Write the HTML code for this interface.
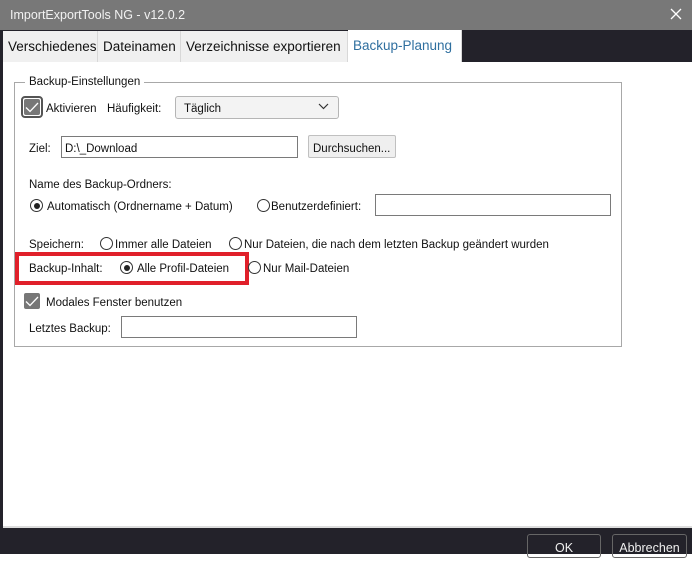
<!DOCTYPE html>
<html><head><meta charset="utf-8"><style>
*{box-sizing:border-box;margin:0;padding:0}
body{width:692px;height:554px;overflow:hidden;background:#fff;font-family:"Liberation Sans",sans-serif;font-size:11.5px;color:#111;position:relative}
.a{position:absolute;white-space:nowrap}
.t{position:absolute;white-space:nowrap;margin-top:2px}
.rad{position:absolute;width:13px;height:13px;border:1px solid #333;border-radius:50%;background:#fff}
.rad.on::after{content:"";position:absolute;left:2.5px;top:2.5px;width:6px;height:6px;border-radius:50%;background:#222}
.inp{position:absolute;border:1px solid #7a7a7a;background:#fff;height:22px}
.tab{position:absolute;top:31px;height:31px;background:#f0f0f0;border-right:1px solid #d8d8d8;font-size:13.5px;line-height:31px;padding-left:5px;color:#111}
</style></head><body>
<div class="a" style="left:0;top:0;width:692px;height:30px;background:#787878"></div>
<div class="a" style="left:10px;top:8px;color:#f2f2f2;font-size:12.5px">ImportExportTools NG - v12.0.2</div>
<svg class="a" style="left:670px;top:8px" width="12" height="12"><path d="M1 1L11 11M11 1L1 11" stroke="#fff" stroke-width="1.3"/></svg>
<div class="a" style="left:0;top:30px;width:692px;height:32px;background:#23222a"></div>
<div class="a" style="left:0;top:30px;width:3px;height:524px;background:#23222a"></div>
<div class="tab" style="left:3px;width:95px">Verschiedenes</div>
<div class="tab" style="left:98px;width:83px">Dateinamen</div>
<div class="tab" style="left:181px;width:167px">Verzeichnisse exportieren</div>
<div class="tab" style="left:348px;width:114px;background:#fff;color:#2f6f9f;top:30px;height:32px">Backup-Planung</div>
<div class="a" style="left:3px;top:62px;width:687px;height:466px;background:#fff"></div>
<div class="a" style="left:3px;top:526px;width:689px;height:2px;background:#ddd"></div>
<div class="a" style="left:0;top:528px;width:692px;height:26px;background:#23222a"></div>
<div class="a" style="left:527px;top:534px;width:74px;height:24px;border:1px solid #666;border-radius:3px;color:#eee;font-size:12.5px;text-align:center;line-height:26px">OK</div>
<div class="a" style="left:612px;top:534px;width:75px;height:24px;border:1px solid #666;border-radius:3px;color:#eee;font-size:12.5px;text-align:center;line-height:26px">Abbrechen</div>
<div class="a" style="left:14px;top:82px;width:608px;height:265px;border:1px solid #a8a8a8"></div>
<div class="t" style="left:25px;top:74px;background:#fff;padding:0 4px">Backup-Einstellungen</div>
<div class="a" style="left:21px;top:96px;width:22px;height:22px;border:2px solid #555;border-radius:4px;background:#fff"></div>
<div class="a" style="left:24px;top:99px;width:16px;height:16px;background:#777;border-radius:2px"></div>
<svg class="a" style="left:25px;top:102px" width="14" height="11"><path d="M1 5.5L5 9.5L13 1" stroke="#fff" stroke-width="1.3" fill="none"/></svg>
<div class="t" style="left:46px;top:101px">Aktivieren</div>
<div class="t" style="left:107px;top:101px">Häufigkeit:</div>
<div class="a" style="left:175px;top:96px;width:164px;height:23px;border:1px solid #b5b5b5;border-radius:3px;background:#f3f3f3"></div>
<div class="t" style="left:184px;top:101px">Täglich</div>
<svg class="a" style="left:318px;top:103px" width="11" height="7"><path d="M1 1L5.5 5.5L10 1" stroke="#333" stroke-width="1.2" fill="none"/></svg>
<div class="t" style="left:29px;top:141px">Ziel:</div>
<div class="inp" style="left:61px;top:136px;width:237px"></div>
<div class="t" style="left:65px;top:141px">D:\_Download</div>
<div class="a" style="left:308px;top:135px;width:88px;height:23px;border:1px solid #c0c0c0;border-radius:2px;background:#efefef"></div>
<div class="t" style="left:313px;top:141px">Durchsuchen...</div>
<div class="t" style="left:29px;top:177px">Name des Backup-Ordners:</div>
<div class="rad on" style="left:30px;top:199px"></div>
<div class="t" style="left:47px;top:199px">Automatisch (Ordnername + Datum)</div>
<div class="rad" style="left:257px;top:199px"></div>
<div class="t" style="left:271px;top:199px">Benutzerdefiniert:</div>
<div class="inp" style="left:375px;top:194px;width:236px"></div>
<div class="t" style="left:29px;top:237px">Speichern:</div>
<div class="rad" style="left:100px;top:237px"></div>
<div class="t" style="left:115px;top:237px">Immer alle Dateien</div>
<div class="rad" style="left:229px;top:237px"></div>
<div class="t" style="left:244px;top:237px">Nur Dateien, die nach dem letzten Backup geändert wurden</div>
<div class="a" style="left:15px;top:252px;width:234px;height:33px;border:4px solid #e0202a"></div>
<div class="t" style="left:29px;top:261px">Backup-Inhalt:</div>
<div class="rad on" style="left:120px;top:261px"></div>
<div class="t" style="left:137px;top:261px">Alle Profil-Dateien</div>
<div class="rad" style="left:248px;top:261px"></div>
<div class="t" style="left:263px;top:261px">Nur Mail-Dateien</div>
<div class="a" style="left:24px;top:293px;width:16px;height:16px;background:#777;border-radius:2px"></div>
<svg class="a" style="left:25px;top:296px" width="14" height="11"><path d="M1 5.5L5 9.5L13 1" stroke="#fff" stroke-width="1.3" fill="none"/></svg>
<div class="t" style="left:46px;top:295px">Modales Fenster benutzen</div>
<div class="t" style="left:29px;top:321px">Letztes Backup:</div>
<div class="inp" style="left:121px;top:316px;width:236px"></div>
</body></html>
